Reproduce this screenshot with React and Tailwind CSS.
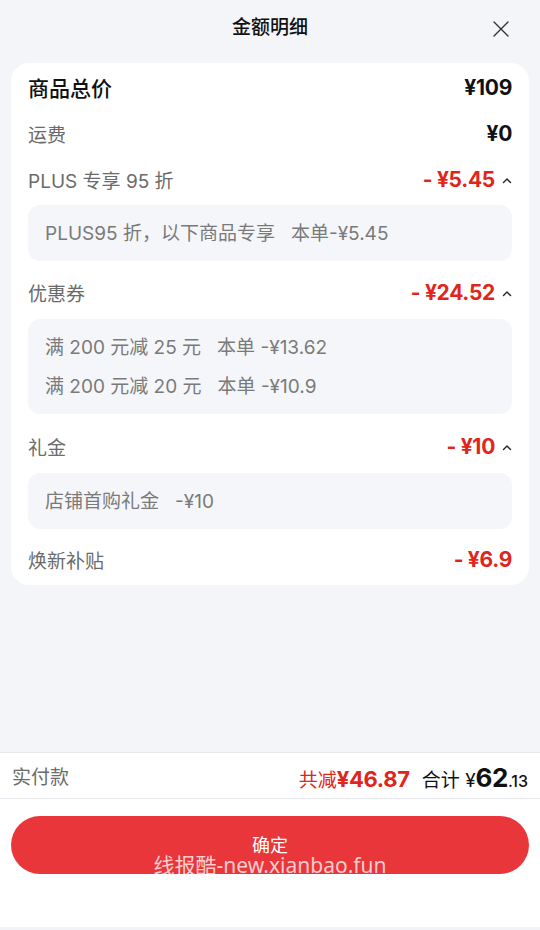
import React from 'react';

const RED = 'text-[#e1251b]';

const Caret = () => (
  <svg width="10" height="8" viewBox="0 0 10 8" className="ml-[7px] mt-[1px]">
    <path d="M1.5 5.5 L5 2 L8.5 5.5" fill="none" stroke="#222" strokeWidth="1.4" strokeLinecap="round" strokeLinejoin="round" />
  </svg>
);

const Row = ({ label, amount, strong, red, caret }) => (
  <div className="h-[46px] pt-[2px] flex items-center justify-between">
    <span className={strong ? 'pt-[2px] text-[21px] font-medium text-[#111]' : 'pt-[4px] text-[19px] text-[#6b6b6b]'}>{label}</span>
    <div className="flex items-center">
      <span className={`text-[21px] font-bold tracking-[-0.3px] ${red ? RED : 'text-[#111]'}`}>{amount}</span>
      {caret && <Caret />}
    </div>
  </div>
);

const Detail = ({ lines, className }) => (
  <div className={`rounded-[12px] bg-[#f5f6f9] pl-[17px] pt-[8px] pb-[9px] ${className}`}>
    {lines.map((l, i) => (
      <div key={i} className="h-[39px] pt-[4px] flex items-center text-[19px] text-[#7a7a7a] whitespace-pre">{l}</div>
    ))}
  </div>
);

export default function App() {
  return (
    <div
      className="w-[540px] h-[930px] bg-[#f4f5f9] flex flex-col overflow-hidden"
      style={{ fontFamily: 'Inter, "Noto Sans CJK SC", sans-serif' }}
    >
      {/* header */}
      <div className="h-[63px] pb-[6px] flex items-center">
        <div className="w-[60px]" />
        <div className="flex-1 text-center text-[19px] font-medium text-[#111]">金额明细</div>
        <div className="w-[60px] pl-[13px] flex items-center">
          <svg width="16" height="16" viewBox="0 0 16 16">
            <path d="M1 1 L15 15 M15 1 L1 15" stroke="#333" strokeWidth="1.4" strokeLinecap="round" />
          </svg>
        </div>
      </div>

      {/* card */}
      <div className="mx-[11px] rounded-[18px] bg-white px-[17px] pt-px pb-[3px]">
        <Row label="商品总价" amount="¥109" strong />
        <Row label="运费" amount="¥0" />
        <Row label="PLUS 专享 95 折" amount="- ¥5.45" red caret />
        <Detail className="mt-[3px] mb-[8px]" lines={['PLUS95 折，以下商品专享   本单-¥5.45']} />
        <Row label="优惠券" amount="- ¥24.52" red caret />
        <Detail className="mt-[4px] mb-[9px]" lines={['满 200 元减 25 元   本单 -¥13.62', '满 200 元减 20 元   本单 -¥10.9']} />
        <Row label="礼金" amount="- ¥10" red caret />
        <Detail className="mt-[4px] mb-[7px]" lines={['店铺首购礼金   -¥10']} />
        <Row label="焕新补贴" amount="- ¥6.9" red />
      </div>

      <div className="flex-1" />

      {/* total bar */}
      <div className="h-[47px] pt-[3px] border-y border-[#e6e7eb] bg-white px-[12px] flex items-center justify-between">
        <span className="pt-[2px] text-[19px] text-[#6b6b6b]">实付款</span>
        <div className="flex items-baseline">
          <span className={`text-[19px] ${RED}`}>共减</span>
          <span className={`text-[22px] font-bold tracking-[-0.3px] ${RED}`}>¥46.87</span>
          <span className="ml-[12px] text-[19px] text-[#111]">合计 ¥</span>
          <span className="text-[26px] font-bold text-[#111] tracking-[-0.5px]">62</span>
          <span className="text-[16px] font-medium text-[#111]">.13</span>
        </div>
      </div>

      {/* action */}
      <div className="h-[128px] bg-white pt-[17px] relative">
        <div className="mx-[11px] h-[58px] rounded-full bg-[#e8363a] flex items-center justify-center">
          <span className="text-[18px] text-white">确定</span>
        </div>
        <div
          className="absolute left-0 right-0 top-[51px] text-center text-[21px] text-white/75 pointer-events-none"
          style={{ fontFamily: '"Noto Sans", "Noto Sans CJK SC", sans-serif' }}
        >
          线报酷-new.xianbao.fun
        </div>
      </div>
      <div className="h-[3px] bg-[#f2f3f7]" />
    </div>
  );
}
